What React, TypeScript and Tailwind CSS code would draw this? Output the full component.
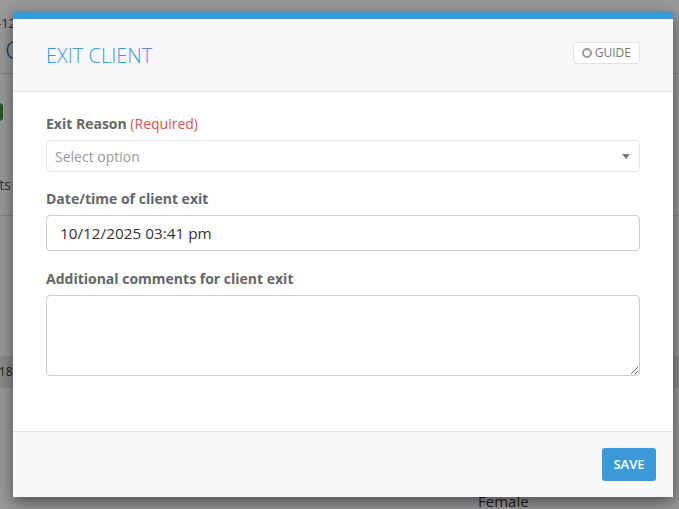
const Label = ({ children }: { children: React.ReactNode }) => (
  <label className="block text-[14px] font-bold leading-5 text-[#666]">{children}</label>
);

export default function App() {
  return (
    <div className="relative h-[509px] w-[679px] overflow-hidden bg-white font-['Open_Sans',sans-serif]">
      {/* page behind the dialog */}
      <div className="w-[679px]">
        <div className="-ml-[3px] pt-[13px] text-[13px] leading-5 text-[#444]">-12 Oct 2025</div>
        <div className="border-b border-[#ddd] pb-[8px] pl-[5px] text-[26px] font-light leading-8 text-[#2f6fa6]">Client</div>
        <div className="pt-[29px]">
          <div className="-ml-[40px] h-[18px] w-[43px] rounded bg-[#3c9d3c]" />
        </div>
        <div className="-ml-[46px] border-b border-[#ddd] pb-[20px] pt-[54px] text-[14px] leading-5 text-[#555]">Contacts</div>
        <div className="mt-[140px] flex h-[32px] items-center bg-[#e6e6e6] -ml-[8px] text-[12px] text-[#333]">1183</div>
        <div className="mt-[103px] pl-[478px] text-[15px] leading-5 text-[#333]">Female</div>
      </div>

      {/* backdrop + dialog */}
      <div className="absolute inset-0 bg-black/40">
        <div className="ml-[13px] mt-[12px] w-[660px] bg-white shadow-[0_5px_15px_rgba(0,0,0,0.5)]">
          <div className="h-[7px] bg-[#3498db]" />
          <div className="flex h-[73px] items-center justify-between border-b border-[#e4e4e4] bg-[#f7f8fa] px-[33px]">
            <h2 className="mt-[2px] text-[20px] font-light text-[#3a9ad9]">EXIT CLIENT</h2>
            <button className="-mt-[4px] flex h-[22px] items-center gap-[3px] rounded-[3px] border border-[#e3e3e3] bg-white pl-[8px] pr-[8px] text-[12px] text-[#777]">
              <span className="h-[10px] w-[10px] rounded-full border-2 border-[#999]" />
              GUIDE
            </button>
          </div>

          <div className="px-[33px] pb-[55px] pt-[22px]">
            <Label>
              Exit Reason <span className="font-normal text-[#d9534f]">(Required)</span>
            </Label>
            <div className="mt-[6px] flex h-[32px] items-center justify-between rounded-[4px] border border-[#e8e8e8] pl-[8px] pr-[8px] text-[14px] text-[#999]">
              Select option
              <svg width="8" height="5" viewBox="0 0 8 5" className="mr-[1px]">
                <path d="M0 0h8L4 5z" fill="#777" />
              </svg>
            </div>

            <div className="mt-[17px]">
              <Label>Date/time of client exit</Label>
            </div>
            <div className="mt-[6px] flex h-[36px] items-center rounded-[4px] border border-[#ccc] px-[13px] text-[15.3px] text-[#333]">
              10/12/2025 03:41 pm
            </div>

            <div className="mt-[18px]">
              <Label>Additional comments for client exit</Label>
            </div>
            <textarea className="mt-[6px] block h-[81px] w-full rounded-[4px] border border-[#ccc]" />
          </div>

          <div className="flex h-[66px] items-center justify-end border-t border-[#e4e4e4] bg-[#f7f8fa] pr-[17px]">
            <button className="h-[33px] w-[54px] rounded-[3px] bg-[#3a9ad9] text-[13px] font-semibold text-white">SAVE</button>
          </div>
        </div>
      </div>
    </div>
  );
}
